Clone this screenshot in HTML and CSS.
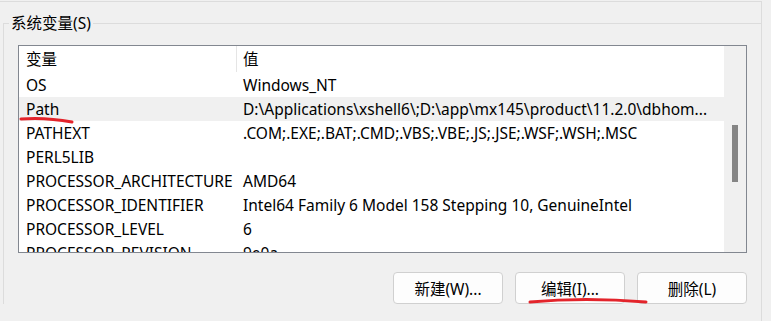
FILE: index.html
```html
<!DOCTYPE html>
<html lang="zh-CN">
<head>
  <meta charset="UTF-8" />
  <title>环境变量</title>
  <link rel="stylesheet" href="styles.css">
</head>
<body>

<div class="frame">
  <fieldset class="group">
    <legend>系统变量(S)</legend>

    <div class="list">
      <div class="table">
        <div class="row head">
          <div class="c1">变量</div>
          <div class="c2">值</div>
        </div>
        <div class="row"><div class="c1">OS</div><div class="c2">Windows_NT</div></div>
        <div class="row sel"><div class="c1">Path</div><div class="c2">D:\Applications\xshell6\;D:\app\mx145\product\11.2.0\dbhom...</div></div>
        <div class="row"><div class="c1">PATHEXT</div><div class="c2">.COM;.EXE;.BAT;.CMD;.VBS;.VBE;.JS;.JSE;.WSF;.WSH;.MSC</div></div>
        <div class="row"><div class="c1">PERL5LIB</div><div class="c2"></div></div>
        <div class="row"><div class="c1">PROCESSOR_ARCHITECTURE</div><div class="c2">AMD64</div></div>
        <div class="row"><div class="c1">PROCESSOR_IDENTIFIER</div><div class="c2">Intel64 Family 6 Model 158 Stepping 10, GenuineIntel</div></div>
        <div class="row"><div class="c1">PROCESSOR_LEVEL</div><div class="c2">6</div></div>
        <div class="row"><div class="c1">PROCESSOR_REVISION</div><div class="c2">9e0a</div></div>
      </div>
      <div class="scroll"><div class="thumb"></div></div>
    </div>

    <div class="actions">
      <button class="btn">新建(W)...</button>
      <button class="btn">编辑(I)...</button>
      <button class="btn">删除(L)</button>
    </div>
  </fieldset>
</div>

<!-- red pen marks drawn over the dialog -->
<svg class="marks" width="771" height="321" viewBox="0 0 771 321">
  <path d="M21 119 Q 45 117 72 122" />
  <path d="M530 302 Q 585 297 646 302" />
</svg>

</body>
</html>
```

FILE: styles.css
```css
html, body { margin: 0; padding: 0; }
body { background: #f0f0f0; width: 771px; height: 321px; overflow: hidden; position: relative;
  font-family: "Noto Sans", "Noto Sans CJK SC", sans-serif; font-size: 15.5px; color: #000; }

.frame { margin-top: 1px; width: 762px; height: 320px; border-top: 1px solid #dcdcdc; border-right: 1px solid #dcdcdc; box-sizing: border-box; }

.group { margin: 11px 0 0 3px; padding: 0 15px 0 14px; border: 1px solid #dcdcdc; border-right: none; border-bottom: none; min-width: 0; }
.group legend { margin-left: -9px; padding: 0 2px; line-height: 20px; font-size: 15.5px; }

.list { display: flex; width: 729px; height: 208px; margin-top: 12px; border: 1px solid #828790; box-sizing: border-box; background: #fff; overflow: hidden; }
.table { flex: 1; overflow: hidden; }
.row { display: flex; height: 24px; line-height: 24px; white-space: nowrap; }
.row.head { height: 27px; line-height: 27px; }
.row.sel { background: #f0f0f0; }
.c1 { width: 218px; padding-left: 7px; box-sizing: border-box; flex: none; overflow: hidden; }
.c2 { flex: 1; padding-left: 6px; overflow: hidden; }
.head .c1 { border-right: 1px solid #e5e5e5; height: 26px; }

.scroll { width: 22px; flex: none; background: #f0f0f0; padding: 79px 0 0 8px; box-sizing: border-box; }
.thumb { width: 6px; height: 57px; background: #858585; }

.actions { display: flex; justify-content: flex-end; gap: 12px; margin-top: 19px; width: 729px; }
.btn { width: 110px; height: 32px; border: 1px solid #d0d0d0; border-radius: 4px; background: #fdfdfd;
  font-family: inherit; font-size: 15.5px; color: #000; padding: 0; }

.marks { position: absolute; left: 0; top: 0; pointer-events: none; }
.marks path { fill: none; stroke: #e3242b; stroke-width: 3; stroke-linecap: round; }
```
